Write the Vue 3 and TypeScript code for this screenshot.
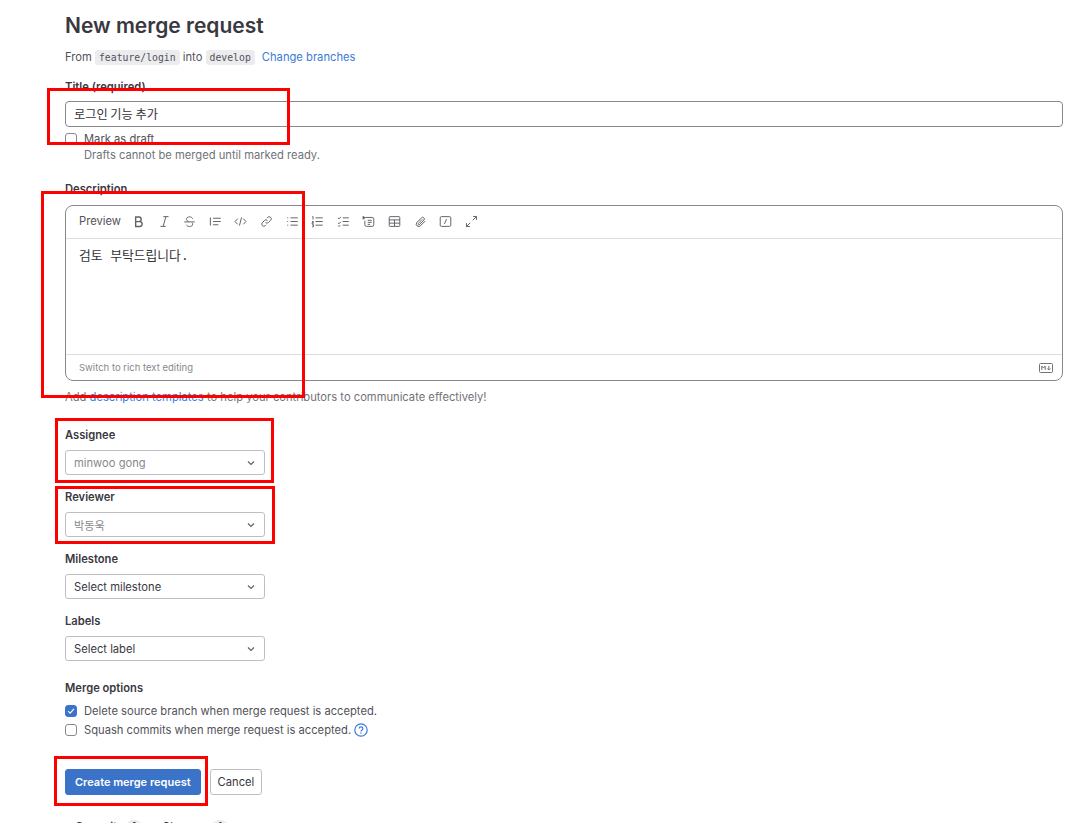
<script setup lang="ts">
const toolbar = [
  { name: 'bold', width: 1.7, d: 'M4.5 2.5h4a2.800 2.800 0 0 1 0 5.600h-4zM4.500 8.100h5a3 3 0 0 1 0 6h-5z' },
  { name: 'italic', d: 'M6.500 2h6.500M3 14h6.500M9.700 2 6.300 14' },
  { name: 'strike', d: 'M1.500 8.500h13M11.800 4.500C11.400 3.200 10 2.300 8 2.300c-2.200 0-3.700 1-3.700 2.800 0 1.300.9 2.300 2.600 2.900M4.200 12c.4 1.300 1.900 2.200 3.900 2.200 2.200 0 3.700-1 3.700-2.900 0-.7-.2-1.200-.6-1.700' },
  { name: 'quote', d: 'M1.700 3v10M5 4h9.500M5 8h9.500M5 12h6.500' },
  { name: 'code', d: 'M4.500 4.500 1.300 8l3.200 3.500M11.500 4.500 14.700 8l-3.200 3.500M9.300 3 6.700 13' },
  { name: 'link', d: 'M6.800 9.200a2.600 2.600 0 0 0 3.700 0l2.600-2.600a2.600 2.600 0 0 0-3.700-3.700L8.300 4M9.200 6.800a2.600 2.600 0 0 0-3.700 0L2.900 9.400a2.600 2.600 0 0 0 3.700 3.700L7.700 12' },
  { name: 'bullets', d: 'M5.500 3.500h9M5.500 8h9M5.500 12.500h9M1.500 3.500h1.200M1.500 8h1.200M1.500 12.500h1.200' },
  { name: 'numbers', d: 'M5.500 3.500h9M5.500 8h9M5.500 12.500h9M1.800 2l.7-.3v3.800M1.300 8h1.500v1.500H1.300v1.300h1.800M1.300 12h1.700v2.500H1.300' },
  { name: 'tasks', d: 'M7 3.500h7.500M7 8h7.500M7 12.500h7.500M1.200 3.500l1.300 1.300L4.600 2.400M1.200 9.500l1.300 1.300 2.100-2.400M1.500 13.500h2.500' },
  { name: 'collapsible', d: 'M4.500 3h8a2 2 0 0 1 2 2v7a2 2 0 0 1-2 2h-7a2 2 0 0 1-2-2V7M7 6.500h5M7 9h5M7 11.500h3', solid: 'M.8 .8 5 3.300.8 5.800z' },
  { name: 'table', d: 'M2.500 2h11a1 1 0 0 1 1 1v10a1 1 0 0 1-1 1h-11a1 1 0 0 1-1-1V3a1 1 0 0 1 1-1zM1.500 6h13M1.500 10h13M8 6v8' },
  { name: 'attach', d: 'M13.700 7.500 8 13.200a3 3 0 0 1-4.700-3.700l5.900-6a2 2 0 0 1 3 2.700l-5.600 5.700a1 1 0 0 1-1.500-1.300l5-5.200' },
  { name: 'slash', d: 'M3 2h10a1.500 1.500 0 0 1 1.500 1.500v9A1.500 1.500 0 0 1 13 14H3a1.500 1.500 0 0 1-1.500-1.500v-9A1.500 1.500 0 0 1 3 2zM9.300 5 6.700 11' },
  { name: 'fullscreen', d: 'M10 1.800h4.200V6M14.200 1.800 9.500 6.500M6 14.200H1.800V10M1.800 14.200l4.700-4.700' }
]

const selects = [
  { label: 'Assignee', value: 'minwoo gong', muted: true },
  { label: 'Reviewer', value: '박동욱', muted: true },
  { label: 'Milestone', value: 'Select milestone', muted: false },
  { label: 'Labels', value: 'Select label', muted: false }
]
</script>

<template>
  <main class="page">
    <h1 class="title">New merge request</h1>
    <p class="branches">
      From <code>feature/login</code> into <code>develop</code>
      <a class="change">Change branches</a>
    </p>

    <label class="label title-label">Title (required)</label>
    <div class="title-input">로그인 기능 추가</div>
    <div class="check draft">
      <span class="box" />
      <span>Mark as draft</span>
    </div>
    <p class="hint">Drafts cannot be merged until marked ready.</p>

    <label class="label desc-label">Description</label>
    <section class="editor">
      <div class="toolbar">
        <span class="preview">Preview</span>
        <svg
          v-for="icon in toolbar"
          :key="icon.name"
          class="tool"
          viewBox="0 0 16 16"
          fill="none"
          stroke="#626168"
          :stroke-width="icon.width ?? 1.2"
        >
          <path :d="icon.d" />
          <path v-if="icon.solid" :d="icon.solid" fill="#626168" stroke="none" />
        </svg>
      </div>
      <div class="body">검토 부탁드립니다.</div>
      <div class="footer">
        <span>Switch to rich text editing</span>
        <svg width="14" height="10" viewBox="0 0 14 10" fill="none" stroke="#737278">
          <rect x="0.5" y="0.5" width="13" height="9" rx="1" />
          <path d="M2.800 7V3l1.700 2 1.700-2v4M9.800 3v4M8.200 5.400 9.800 7l1.600-1.600" />
        </svg>
      </div>
    </section>
    <p class="templates">
      Add <a>description templates</a> to help your contributors to communicate effectively!
    </p>

    <div class="selects">
      <div v-for="item in selects" :key="item.label" class="field">
        <label class="label">{{ item.label }}</label>
        <div class="select" :class="{ muted: item.muted }">
          <span>{{ item.value }}</span>
          <svg width="10" height="10" viewBox="0 0 10 10" fill="none" stroke="#626168" stroke-width="1.2">
            <path d="M2 3.500 5 6.500 8 3.500" />
          </svg>
        </div>
      </div>
    </div>

    <label class="label options-label">Merge options</label>
    <div class="check option">
      <span class="box checked">
        <svg width="12" height="12" viewBox="0 0 12 12" fill="none" stroke="#fff" stroke-width="1.3">
          <path d="M2.500 6.200 5 8.600 9.500 3.500" />
        </svg>
      </span>
      <span>Delete source branch when merge request is accepted.</span>
    </div>
    <div class="check option">
      <span class="box" />
      <span>Squash commits when merge request is accepted.</span>
      <svg class="help" width="14" height="14" viewBox="0 0 14 14" fill="none" stroke="#3b7bd6" stroke-width="1.2">
        <circle cx="7" cy="7" r="6.200" />
        <path d="M5.200 5.500C5.200 4.500 6 3.900 7 3.900s1.900.6 1.900 1.600c0 1.500-1.900 1.500-1.900 3M7 9.600v1.100" />
      </svg>
    </div>

    <div class="actions">
      <button class="btn primary">Create merge request</button>
      <button class="btn">Cancel</button>
    </div>

    <nav class="tabs">
      <span class="tab active">Commits <em>1</em></span>
      <span class="tab">Changes <em>1</em></span>
    </nav>

    <div class="mark mark-title" />
    <div class="mark mark-desc" />
    <div class="mark mark-assignee" />
    <div class="mark mark-reviewer" />
    <div class="mark mark-create" />
  </main>
</template>

<style scoped>
.page {
  position: relative;
  box-sizing: border-box;
  height: 823px;
  overflow: hidden;
  padding: 0 15px 0 65px;
  color: #3a383f;
  font-family: Inter, 'Noto Sans CJK KR', sans-serif;
  font-size: 11.2px;
}

.title {
  margin: 0;
  padding-top: 13px;
  font-size: 21px;
  line-height: 26px;
  font-weight: 600;
  color: #3a383f;
}

.branches {
  margin: 9px 0 0;
  line-height: 18px;
  color: #53525a;
}

code {
  padding: 2px 4px;
  border-radius: 3px;
  background: #ececef;
  font-family: 'DejaVu Sans Mono', 'Liberation Mono', monospace;
  font-size: 9.8px;
}

.change {
  margin-left: 7px;
  color: #3b7bd6;
}

.label {
  display: block;
  font-weight: 600;
  line-height: 14px;
  color: #3a383f;
}

.title-label {
  margin-top: 13px;
}

.title-input {
  box-sizing: border-box;
  height: 26px;
  margin-top: 7px;
  padding: 0 8px;
  border: 1px solid #89888d;
  border-radius: 4px;
  line-height: 24px;
  font-family: 'Noto Sans CJK KR', sans-serif;
  font-size: 12.2px;
  color: #333238;
}

.check {
  display: flex;
  align-items: center;
  gap: 7px;
  line-height: 16px;
  color: #53525a;
}

.draft {
  margin-top: 4px;
}

.box {
  box-sizing: border-box;
  display: flex;
  align-items: center;
  justify-content: center;
  width: 12px;
  height: 12px;
  border: 1px solid #89888d;
  border-radius: 3px;
  background: #fff;
}

.box.checked {
  border-color: #3b73c9;
  background: #3b73c9;
}

.hint {
  margin: 0 0 0 19px;
  line-height: 16px;
  color: #737278;
}

.desc-label {
  margin-top: 19px;
}

.editor {
  margin-top: 9px;
  border: 1px solid #89888d;
  border-radius: 8px;
  background: #fff;
}

.toolbar {
  display: flex;
  align-items: center;
  box-sizing: border-box;
  height: 33px;
  padding: 0 0 2px 13px;
  border-bottom: 1px solid #dcdcde;
}

.preview {
  width: 53px;
  color: #53525a;
}

.tool {
  width: 13px;
  height: 13px;
  margin-right: 12.6px;
  flex: none;
}

.body {
  box-sizing: border-box;
  height: 116px;
  padding: 8px 13px;
  border-bottom: 1px solid #dcdcde;
  font-family: 'DejaVu Sans Mono', 'Noto Sans CJK KR', monospace;
  font-size: 12.8px;
  line-height: 18px;
  color: #333238;
}

.footer {
  display: flex;
  align-items: center;
  justify-content: space-between;
  height: 25px;
  padding: 0 9px 0 13px;
  font-size: 9.5px;
  color: #89888d;
}

.templates {
  margin: 9px 0 0;
  line-height: 14px;
  color: #737278;
}

.templates a {
  color: #3b7bd6;
}

.selects {
  display: flex;
  flex-direction: column;
  margin-top: 24px;
}

.field {
  width: 200px;
  height: 62px;
}

.select {
  box-sizing: border-box;
  display: flex;
  align-items: center;
  justify-content: space-between;
  height: 25px;
  margin-top: 8px;
  padding: 0 8px;
  border: 1px solid #bfbfc3;
  border-radius: 3px;
  color: #3a383f;
}

.select.muted {
  color: #89888d;
}

.options-label {
  margin-top: 5px;
}

.option {
  margin-top: 3px;
}

.options-label + .option {
  margin-top: 8px;
}

.help {
  margin-left: -4px;
}

.actions {
  display: flex;
  gap: 9px;
  margin-top: 31px;
}

.btn {
  height: 26px;
  padding: 0 7px;
  border: 1px solid #bfbfc3;
  border-radius: 3px;
  background: #fff;
  color: #3a383f;
  font: inherit;
}

.btn.primary {
  padding: 0 9px;
  border-color: #3b73c9;
  background: #3b73c9;
  color: #fff;
  font-size: 11px;
  font-weight: 600;
}

.tabs {
  display: flex;
  gap: 20px;
  margin-top: 25px;
  padding-left: 10px;
}

.tab em {
  display: inline-block;
  width: 16px;
  border-radius: 8px;
  background: #ececef;
  font-style: normal;
  text-align: center;
}

.tab.active {
  font-weight: 600;
}

.mark {
  position: absolute;
  box-sizing: border-box;
  border: 3px solid #f00;
  pointer-events: none;
}

.mark-title {
  left: 47px;
  top: 88px;
  width: 243px;
  height: 57px;
}

.mark-desc {
  left: 41px;
  top: 191px;
  width: 264px;
  height: 207px;
}

.mark-assignee {
  left: 55px;
  top: 418px;
  width: 219px;
  height: 65px;
}

.mark-reviewer {
  left: 55px;
  top: 486px;
  width: 220px;
  height: 58px;
}

.mark-create {
  left: 54px;
  top: 756px;
  width: 154px;
  height: 50px;
}
</style>

<style>
html,
body {
  margin: 0;
  background: #fff;
}
</style>
